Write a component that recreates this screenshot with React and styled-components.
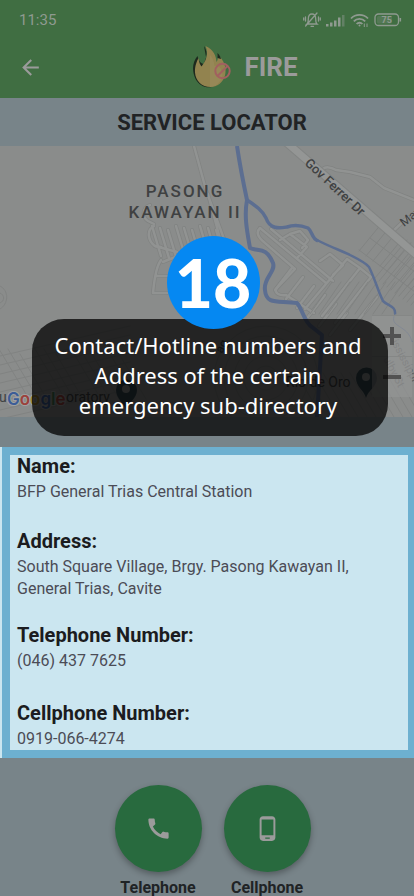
import React from "react";
import styled, { createGlobalStyle } from "styled-components";
import { MdArrowBack, MdCall, MdPhoneAndroid } from "react-icons/md";

const Global = createGlobalStyle`
  * { box-sizing: border-box; }
  html { scrollbar-width: none; }
  body { margin: 0; background: #788489; font-family: Roboto, sans-serif; }
`;

const Page = styled.div`
  display: flex;
  flex-direction: column;
  min-height: 100vh;
  overflow-x: hidden;
  background: #788489;
`;

const Header = styled.header`
  background: #406e42;
  color: #9b9b9b;
`;

const StatusBar = styled.div`
  display: flex;
  align-items: center;
  justify-content: space-between;
  height: 40px;
  padding: 0 12px 0 19px;
  font-size: 15px;
  color: #8f9a90;
`;

const StatusIcons = styled.div`
  display: flex;
  align-items: center;
  gap: 5px;
`;

const AppBar = styled.div`
  display: grid;
  grid-template-columns: 60px 1fr;
  align-items: center;
  height: 58px;
  padding-bottom: 4px;
`;

const IconButton = styled.button`
  display: flex;
  align-items: center;
  justify-content: center;
  width: 60px;
  height: 44px;
  padding: 0;
  border: 0;
  background: none;
  color: inherit;
`;

const Brand = styled.div`
  display: flex;
  align-items: center;
  justify-content: center;
  gap: 12px;
  padding-left: 16px;
`;

const BrandTitle = styled.h1`
  margin: 0;
  font-size: 26px;
  line-height: 32px;
  font-weight: 700;
`;

const SectionTitle = styled.h2`
  margin: 0;
  padding: 2px 0 0 10px;
  font-size: 22px;
  line-height: 46px;
  font-weight: 700;
  text-align: center;
  color: #212325;
`;

const MapArea = styled.section`
  position: relative;
  height: 271px;
  margin-bottom: 30px;
  background: #8a8c8b;
`;

const MapDrawing = styled.svg`
  display: block;
  width: 100%;
  height: 100%;
`;

const ZoomControls = styled.div`
  position: absolute;
  right: 2px;
  bottom: 20px;
  display: flex;
  flex-direction: column;
  width: 40px;
  background: rgba(147, 148, 148, 0.7);
`;

const ZoomButton = styled.button`
  display: flex;
  align-items: center;
  justify-content: center;
  height: 41px;
  padding: 0;
  border: 0;
  border-top: 1px solid #858786;
  background: none;
  color: #525252;
`;

const Guide = styled.aside`
  position: absolute;
  top: 90px;
  left: 12px;
  right: 0;
  display: flex;
  flex-direction: column;
  align-items: center;
`;

const StepBadge = styled.div`
  position: relative;
  z-index: 1;
  display: flex;
  align-items: center;
  justify-content: center;
  width: 93px;
  height: 93px;
  margin-bottom: -10px;
  border-radius: 50%;
  background: #0588f2;
  color: #fff;
  font-family: Lato, sans-serif;
  font-weight: 900;
  font-size: 66px;
  line-height: 93px;
`;

const Callout = styled.p`
  align-self: stretch;
  margin: 0 26px 0 20px;
  padding: 11px 18px 16px 14px;
  border-radius: 32px;
  background: rgba(0, 0, 0, 0.74);
  color: #fff;
  font-family: "Noto Sans", sans-serif;
  font-size: 22px;
  line-height: 30px;
  text-align: center;
`;

const InfoCard = styled.dl`
  margin: 0 0 0 2px;
  padding: 0 8px 0 7px;
  border: 8px solid #6db0d0;
  border-right-width: 6px;
  background: #cbe6f0;
  box-shadow: -2px 0 0 #cbe6f0;
`;

const Field = styled.div`
  padding-bottom: ${(p) => p.$gap}px;
`;

const Term = styled.dt`
  font-size: 20px;
  line-height: 23px;
  font-weight: 700;
  color: #1b1c20;
`;

const Detail = styled.dd`
  max-width: 350px;
  margin: 0;
  padding-top: 3px;
  font-size: 16px;
  line-height: 22px;
  color: #4b4c56;
`;

const Actions = styled.nav`
  display: flex;
  justify-content: center;
  gap: 22px;
  padding: 27px 0 0 11px;
`;

const Action = styled.button`
  display: flex;
  flex-direction: column;
  align-items: center;
  gap: 7px;
  width: 87px;
  padding: 0;
  border: 0;
  background: none;
  font-family: inherit;
  font-size: 16px;
  line-height: 18px;
  font-weight: 700;
  color: #202325;
`;

const ActionDisc = styled.span`
  display: flex;
  align-items: center;
  justify-content: center;
  width: 87px;
  height: 87px;
  border-radius: 50%;
  background: #286a3e;
  color: #9b9b9b;
  box-shadow: 0 3px 6px rgba(0, 0, 0, 0.3);
`;

const BellOff = () => (
  <svg width="18" height="16" viewBox="0 0 18 16" fill="none" stroke="currentColor" strokeWidth="1.3" strokeLinecap="round">
    <path d="M4 12h10c-1.300-1-1.300-2.500-1.300-5C12.700 3.500 11 2 9 2S5.300 3.500 5.300 7c0 2.500 0 4-1.300 5ZM8 14.300h2.500M2.600 14L14 1M2.500 5v4M.700 6v2M15.500 5v4M17.300 6v2" />
  </svg>
);

const Signal = () => (
  <svg width="19" height="14" viewBox="0 0 19 14" fill="currentColor">
    <path d="M0 11h2.500v2.500H0zM4 9.500h2.500v4H4zM8 7.500h2.500v6H8zM12 4.500h2.500v9H12z" />
    <path d="M16 2h2.500v11.500H16z" opacity=".45" />
  </svg>
);

const Wifi = () => (
  <svg width="19" height="15" viewBox="0 0 19 15" fill="none" stroke="currentColor" strokeWidth="1.800">
    <path d="M1 5.500C5.500.700 13.500.700 18 5.500M3.800 8.300c3-3.200 8.400-3.200 11.400 0M6.600 11c1.600-1.700 4.200-1.700 5.800 0" />
    <circle cx="9.500" cy="12.500" r="1" fill="currentColor" stroke="none" />
    <path d="M14.300 10.500v3.500M17 10.500v3.500" strokeWidth="1" />
  </svg>
);

const Battery = () => (
  <svg width="28" height="14" viewBox="0 0 28 14">
    <rect x="1" y="1" width="23.500" height="11.500" rx="3.500" fill="none" stroke="currentColor" strokeWidth="1.300" />
    <rect x="3" y="3" width="15" height="7.500" rx="1.500" fill="currentColor" opacity=".25" />
    <path d="M26.300 5v3.500" stroke="currentColor" strokeWidth="1.600" />
    <text x="12.700" y="10" textAnchor="middle" fontFamily="Roboto, sans-serif" fontSize="9" fontWeight="700" fill="currentColor">75</text>
  </svg>
);

const Flame = () => (
  <svg width="40" height="44" viewBox="0 0 40 44">
    <path d="M12 1c4 6 3 11-.500 18C8 18 7 16 5.500 11 .500 17-.500 25 3.500 34c4 7 10 9 16 8z" fill="#1d2a1e" />
    <path d="M13.500 1C22 5 24 11 24.500 17c1.300-2 2-4 1-7.500C32 15 35 23 33 30.500c-2 7-8 11.500-14.500 11.500C10 42 3.500 36 3 27.500 2.600 21 5 16 6.500 13c.500 4 1.500 7 3 8.500C14 16 17 9 13.500 1z" fill="#92834f" />
    <path d="M18 42V10c3 3 4 7 4.500 11 4-1 8 3 8 9-2 8-7 12-12.500 12z" fill="#9b8c5d" opacity=".6" />
    <path d="M25.500 8c2 2 3 4 3.500 6l-3.500-1z" fill="#1d2a1e" />
    <g fill="none" stroke="#a2605f" strokeWidth="2">
      <circle cx="30.500" cy="26" r="7.200" />
      <path d="M25.500 31L35.500 21" />
    </g>
  </svg>
);

const Pin = ({ x, y }) => (
  <g transform={`translate(${x} ${y})`}>
    <path d="M0 17C-2 9-10 6-10-3a10.500 10.500 0 0 1 21 0C11 6 2 9 0 17Z" fill="#354750" />
    <circle cx="0" cy="-4" r="4" fill="#8b8f90" />
  </g>
);

const range = (n) => Array.from({ length: n }, (_, i) => i);

const Streets = () => (
  <g fill="none" strokeLinecap="round" strokeLinejoin="round">
    {[{ c: "#818382", w: 4 }, { c: "#919392", w: 2.5 }].map(({ c, w }) => (
      <g key={c} stroke={c} strokeWidth={w}>
        <path d="M194 0L206 44L231 112M208 48L222 100" />
        <path d="M150 59c-8 3-8 12-2 16l6 3M154 80c-8 4-6 15 1 20l6 1M161 114c-6 8-7 24-8 33h14M163 116c16-7 30-10 48-20M157 130h12" />
        {range(9).map((i) => (
          <path key={i} d={`M${152 + i * 8} ${80 + (i % 3) * 2}l9 30`} />
        ))}
        <path d="M155 100l22 6" />
        <path d="M392 86L408 71M322 24c3-4 9-3 14 0l14 2 20 5 14 11 30 12" />
        <path d="M260 82c-5 5-1 10 5 15l30 26-18 19c-4 5 3 8 9 7l28 18" />
        <path d="M260 82l66 55M271 83l62 52M280 94l10-6 17 13-10 11M290 88l10-3 8 9-6 8M320 115l10-7 13 11-10 10M322 170l38-48-13-9-42 50M335 177l36-46-11-9M350 184l27-33" />
        {range(6).map((i) => (
          <path key={i} d={`M${292 + i * 11} ${122 + i * 9}l-17 22`} />
        ))}
      </g>
    ))}
    <g stroke="#818382" strokeWidth="1">
      {range(9).map((i) => (
        <path key={i} d={`M${359 + i * 7} ${105 + i * 5}l23-28`} />
      ))}
      {range(13).map((i) => (
        <path key={i} d={`M${375 + i * 4} ${132 + i * 3}l32-38`} />
      ))}
      <path d="M359 104l56 42M370 92l45 34M382 80l32 28" />
      {range(11).map((i) => (
        <path key={i} d={`M${-4 + i * 12} ${198 + (i % 3) * 5}l30 50`} />
      ))}
      {range(8).map((i) => (
        <path key={i} d={`M0 ${210 + i * 9}l130-30`} />
      ))}
      {range(5).map((i) => (
        <circle key={i} cx="266" cy="232" r={12 + i * 10} />
      ))}
      <path d="M0 140c9 4 9 18 0 23M0 147c5 2 5 8 0 10" />
      {range(12).map((i) => (
        <path key={i} d={`M${322 + i * 9} 271l-26-44`} />
      ))}
      {range(9).map((i) => (
        <path key={i} d={`M${310 + i * 9} 168l22-32`} />
      ))}
    </g>
  </g>
);

const logoLetters = [
  ["G", "#3c5d97"],
  ["o", "#9b413c"],
  ["o", "#9a7c2b"],
  ["g", "#3c5d97"],
  ["l", "#3f7650"],
  ["e", "#9b413c"],
];

const LocatorMap = () => (
  <MapDrawing viewBox="0 0 414 271" preserveAspectRatio="xMidYMid slice" role="img" aria-label="Map of Pasong Kawayan II">
    <Streets />
    <path d="M286-4L420 112" stroke="#828483" strokeWidth="9" />
    <path d="M286-4L420 112" stroke="#949695" strokeWidth="7" />
    <g fill="none" stroke="#5c6e91" strokeLinejoin="round">
      <path d="M237 0C240 20 244 40 247 54C244 70 247 85 250 102C258 106 266 100 273 117C276 126 263 132 265 144C266 160 280 154 297 157C303 164 304 176 312 181L322 189L317 271" strokeWidth="4" />
      <path d="M247 54C256 60 262 64 266 72C270 84 280 82 287 81C295 78 303 80 308 82C313 86 311 92 318 95" strokeWidth="3.500" />
      <path d="M317 94C330 101 345 106 350 109C358 113 366 117 369 121C375 133 378 145 383 155C388 160 396 160 395 168" strokeWidth="2.500" />
      <path d="M395 168C388 182 408 178 412 196" strokeWidth="1" />
    </g>
    <g fontFamily="Roboto, sans-serif" fill="#3f4142">
      <g fontSize="17" fontWeight="500" letterSpacing="2" textAnchor="middle">
        <text x="185" y="51">PASONG</text>
        <text x="185" y="72">KAWAYAN II</text>
      </g>
      <text transform="translate(304 18) rotate(43)" fontSize="13" fontWeight="500">Gov Ferrer Dr</text>
      <text transform="translate(404 81) rotate(-38)" fontSize="12">May</text>
      <text transform="translate(222 208) rotate(-62)" fontSize="12">ag</text>
      <text transform="translate(391 196) rotate(62)" fontSize="11" fill="#5f6161">ississippi</text>
      <text transform="translate(383 213) rotate(62)" fontSize="11" fill="#5f6161">ulby St</text>
      <text x="286" y="241" fontSize="14">Rio de Oro</text>
      <text x="-1" y="256" fontSize="14">u</text>
      <text x="66" y="256" fontSize="14">oratory</text>
    </g>
    <Pin x={126} y={247} />
    <Pin x={366} y={235} />
    <text x="7" y="259" fontFamily="Inter, sans-serif" fontSize="17" fontWeight="600" stroke="#a0a1a1" strokeWidth="2" paintOrder="stroke">
      {logoLetters.map(([letter, color], i) => (
        <tspan key={i} fill={color}>{letter}</tspan>
      ))}
    </text>
  </MapDrawing>
);

const fields = [
  { term: "Name:", detail: "BFP General Trias Central Station", gap: 27 },
  { term: "Address:", detail: "South Square Village, Brgy. Pasong Kawayan II, General Trias, Cavite", gap: 24 },
  { term: "Telephone Number:", detail: "(046) 437 7625", gap: 30 },
  { term: "Cellphone Number:", detail: "0919-066-4274", gap: 0 },
];

export default function App() {
  return (
    <Page>
      <Global />
      <Header>
        <StatusBar>
          <span>11:35</span>
          <StatusIcons>
            <BellOff />
            <Signal />
            <Wifi />
            <Battery />
          </StatusIcons>
        </StatusBar>
        <AppBar>
          <IconButton aria-label="Back">
            <MdArrowBack size={25} />
          </IconButton>
          <Brand>
            <Flame />
            <BrandTitle>FIRE</BrandTitle>
          </Brand>
        </AppBar>
      </Header>
      <main>
        <SectionTitle>SERVICE LOCATOR</SectionTitle>
        <MapArea>
          <LocatorMap />
          <ZoomControls>
            <ZoomButton aria-label="Zoom in">
              <svg width="18" height="18" viewBox="0 0 18 18" stroke="currentColor" strokeWidth="4">
                <path d="M9 0v18M0 9h18" />
              </svg>
            </ZoomButton>
            <ZoomButton aria-label="Zoom out">
              <svg width="18" height="18" viewBox="0 0 18 18" stroke="currentColor" strokeWidth="4">
                <path d="M0 9h18" />
              </svg>
            </ZoomButton>
          </ZoomControls>
          <Guide>
            <StepBadge>18</StepBadge>
            <Callout>Contact/Hotline numbers and Address of the certain emergency sub-directory</Callout>
          </Guide>
        </MapArea>
        <InfoCard>
          {fields.map(({ term, detail, gap }) => (
            <Field key={term} $gap={gap}>
              <Term>{term}</Term>
              <Detail>{detail}</Detail>
            </Field>
          ))}
        </InfoCard>
        <Actions>
          <Action>
            <ActionDisc><MdCall size={27} /></ActionDisc>
            Telephone
          </Action>
          <Action>
            <ActionDisc><MdPhoneAndroid size={27} /></ActionDisc>
            Cellphone
          </Action>
        </Actions>
      </main>
    </Page>
  );
}
